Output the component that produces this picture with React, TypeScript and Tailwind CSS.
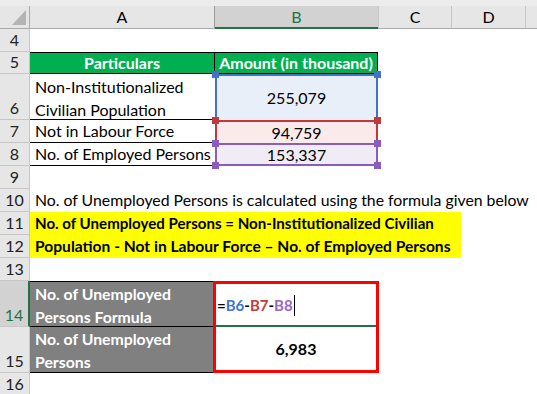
import type { FC, ReactNode } from "react"

const ROWHEAD = "w-[30px] shrink-0 bg-[#e6e6e6] border-r border-b border-[#c6c6c6] flex items-end justify-center text-[#222] leading-[22px]"

type RowProps = {
  n: number
  h: string
  active?: boolean
  children?: ReactNode
}

const Row: FC<RowProps> = ({ n, h, active, children }) => {
  return (
    <div className={`flex ${h}`}>
      <div
        className={
          active
            ? "w-[30px] shrink-0 bg-[#d2d2d2] border-r-2 border-r-[#217346] border-b border-[#c6c6c6] flex items-end justify-center text-[#217346] leading-[22px]"
            : ROWHEAD
        }
      >
        {n}
      </div>
      {children}
    </div>
  )
}

const Handle: FC<{ pos: string; color: string }> = ({ pos, color }) => (
  <span className={`absolute w-[7px] h-[7px] z-10 ${pos} ${color}`} />
)

const App: FC = () => {
  return (
    <div className="w-[537px] h-[394px] overflow-hidden bg-white font-['Lato','Open_Sans',sans-serif] text-[16px] text-black">
      <div className="h-[6px] bg-[#ececec]" />

      {/* column headers */}
      <div className="flex h-[23px] bg-[#e6e6e6] leading-[22px]">
        <div className="w-[30px] shrink-0 border-r border-b border-[#ababab] flex items-end justify-end pr-[3px] pb-[3px]">
          <svg width="14" height="15" viewBox="0 0 14 15">
            <polygon points="14,0 14,15 0,15" fill="#b4b4b4" />
          </svg>
        </div>
        <div className="w-[185px] shrink-0 border-r border-r-[#9b9b9b] border-b border-b-[#ababab] text-center">A</div>
        <div className="w-[163px] shrink-0 bg-[#d2d2d2] border-b-2 border-[#217346] text-center text-[#217346]">B</div>
        <div className="w-[74px] shrink-0 border-l border-r border-[#c6c6c6] border-b border-b-[#ababab] text-center">C</div>
        <div className="w-[74px] shrink-0 border-r border-[#c6c6c6] border-b border-b-[#ababab] text-center">D</div>
        <div className="flex-1 border-b border-[#ababab]" />
      </div>

      <Row n={4} h="h-[23px]" />

      <Row n={5} h="h-[22px]">
        <div className="w-[185px] shrink-0 bg-[#00b050] border-y border-r border-black text-white font-bold text-center leading-[20px]">
          Particulars
        </div>
        <div className="w-[163px] shrink-0 bg-[#00b050] border-y border-r border-black text-white font-bold text-center leading-[20px] whitespace-nowrap">
          Amount (in thousand)
        </div>
      </Row>

      <Row n={6} h="h-[46px]">
        <div className="w-[185px] shrink-0 border-b border-black pl-[5px] leading-[23px] pt-[1px]">
          Non-Institutionalized
          <br />
          Civilian Population
        </div>
        <div className="relative w-[163px] shrink-0 bg-[#e9eff8] border-x-2 border-t-2 border-[#4472c4] flex items-center justify-center">
          <Handle pos="-left-[5px] -top-[5px]" color="bg-[#4472c4]" />
          <Handle pos="-right-[5px] -top-[5px]" color="bg-[#4472c4]" />
          255,079
        </div>
      </Row>

      <Row n={7} h="h-[23px]">
        <div className="w-[185px] shrink-0 border-b border-black pl-[5px] leading-[22px]">Not in Labour Force</div>
        <div className="relative w-[163px] shrink-0 bg-[#fbeaea] border-x-2 border-t-2 border-[#c0393b] flex items-center justify-center leading-[20px]">
          <Handle pos="-left-[5px] -top-[5px]" color="bg-[#c0393b]" />
          <Handle pos="-right-[5px] -top-[5px]" color="bg-[#c0393b]" />
          94,759
        </div>
      </Row>

      <Row n={8} h="h-[23px]">
        <div className="w-[185px] shrink-0 border-b border-black pl-[5px] leading-[22px] whitespace-nowrap">No. of Employed Persons</div>
        <div className="relative w-[163px] shrink-0 bg-[#efecf6] border-2 border-[#8a5cc0] flex items-center justify-center leading-[19px]">
          <Handle pos="-left-[5px] -top-[5px]" color="bg-[#8a5cc0]" />
          <Handle pos="-right-[5px] -top-[5px]" color="bg-[#8a5cc0]" />
          <Handle pos="-left-[5px] -bottom-[5px]" color="bg-[#8a5cc0]" />
          <Handle pos="-right-[5px] -bottom-[5px]" color="bg-[#8a5cc0]" />
          153,337
        </div>
      </Row>

      <Row n={9} h="h-[23px]" />

      <Row n={10} h="h-[23px]">
        <div className="pl-[5px] leading-[22px] whitespace-nowrap text-[15.8px]">
          No. of Unemployed Persons is calculated using the formula given below
        </div>
      </Row>

      <Row n={11} h="h-[23px]">
        <div className="w-[431px] shrink-0 bg-[#ffff00] pl-[5px] font-bold text-[15.1px] leading-[23px] whitespace-nowrap">
          No. of Unemployed Persons = Non-Institutionalized Civilian
        </div>
      </Row>

      <Row n={12} h="h-[23px]">
        <div className="w-[431px] shrink-0 bg-[#ffff00] pl-[5px] font-bold text-[15.6px] leading-[22px] whitespace-nowrap">
          Population - Not in Labour Force – No. of Employed Persons
        </div>
      </Row>

      <Row n={13} h="h-[23px]" />

      <Row n={14} h="h-[46px]" active>
        <div className="w-[183px] shrink-0 bg-[#808080] border-y border-black text-white font-bold text-[15.8px] pl-[5px] leading-[23px]">
          No. of Unemployed
          <br />
          Persons Formula
        </div>
        <div className="relative w-[166px] shrink-0 border-x-[3px] border-t-[3px] border-[#ff0000] flex items-center pl-[1px] font-bold text-[15px]">
          <span>=</span>
          <span className="text-[#3f74cf]">B6</span>
          <span>-</span>
          <span className="text-[#c83b3b]">B7</span>
          <span>-</span>
          <span className="text-[#9666c8]">B8</span>
          <span className="ml-[1px] w-px h-[21px] bg-black" />
          <span className="absolute left-0 right-0 bottom-0 h-[2px] bg-[#217346]" />
        </div>
      </Row>

      <Row n={15} h="h-[46px]">
        <div className="w-[183px] shrink-0 bg-[#808080] border-b border-black text-white font-bold text-[15.8px] pl-[5px] leading-[23px]">
          No. of Unemployed
          <br />
          Persons
        </div>
        <div className="w-[166px] shrink-0 border-x-[3px] border-b-[3px] border-[#ff0000] flex items-center justify-center font-bold">
          6,983
        </div>
      </Row>

      <Row n={16} h="h-[23px]" />
    </div>
  )
}

export default App
